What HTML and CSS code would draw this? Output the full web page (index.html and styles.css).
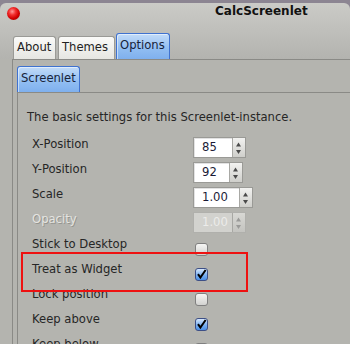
FILE: index.html
```html
<!DOCTYPE html>
<html>
<head>
<meta charset="utf-8">
<link rel="stylesheet" href="styles.css">
</head>
<body>
<div class="window">
  <div class="titlebar">
    <span class="close"></span>
    <span class="title">CalcScreenlet</span>
  </div>
  <div class="tabs">
    <div class="tab t-about">About</div>
    <div class="tab t-themes">Themes</div>
    <div class="tab active t-options">Options</div>
  </div>
  <div class="page">
    <div class="subtabs">
      <div class="tab active t-screenlet">Screenlet</div>
    </div>
    <div class="subpage">
      <p class="desc">The basic settings for this Screenlet-instance.</p>
      <div class="grid">
        <div class="label">X-Position</div>
        <div class="spin w53"><span class="val">85</span><span class="arrows"><svg width="11" height="18" viewBox="0 0 11 18"><path d="M3 7.5h5l-2.5-4z M3 11h5l-2.5 4z" fill="#4a4a4a"/></svg></span></div>

        <div class="label">Y-Position</div>
        <div class="spin w50"><span class="val">92</span><span class="arrows"><svg width="11" height="18" viewBox="0 0 11 18"><path d="M3 7.5h5l-2.5-4z M3 11h5l-2.5 4z" fill="#4a4a4a"/></svg></span></div>

        <div class="label">Scale</div>
        <div class="spin w60"><span class="val">1.00</span><span class="arrows"><svg width="11" height="18" viewBox="0 0 11 18"><path d="M3 7.5h5l-2.5-4z M3 11h5l-2.5 4z" fill="#4a4a4a"/></svg></span></div>

        <div class="label disabled">Opacity</div>
        <div class="spin w53 off"><span class="val">1.00</span><span class="arrows"><svg width="11" height="18" viewBox="0 0 11 18"><path d="M3 7.5h5l-2.5-4z M3 11h5l-2.5 4z" fill="#9a9a98"/></svg></span></div>

        <div class="label">Stick to Desktop</div>
        <div class="check"></div>

        <div class="label">Treat as Widget</div>
        <div class="check on"><svg width="13" height="13" viewBox="0 0 13 13"><path d="M3 6.2l2.4 3.3L10.6 2" fill="none" stroke="#000" stroke-width="2"/></svg></div>

        <div class="label">Lock position</div>
        <div class="check"></div>

        <div class="label">Keep above</div>
        <div class="check on"><svg width="13" height="13" viewBox="0 0 13 13"><path d="M3 6.2l2.4 3.3L10.6 2" fill="none" stroke="#000" stroke-width="2"/></svg></div>

        <div class="label">Keep below</div>
        <div class="check"></div>
      </div>
    </div>
  </div>
  <div class="highlight"></div>
</div>
</body>
</html>
```

FILE: styles.css
```css
html, body {
  margin: 0;
  padding: 0;
}
body {
  width: 350px;
  height: 344px;
  overflow: hidden;
  background: #8c8592;
  font-family: "DejaVu Sans", sans-serif;
  font-size: 11.6px;
  color: #2a2a2a;
}
.window {
  position: relative;
  margin-top: 3px;
  height: 341px;
  border-radius: 6px 6px 0 0;
  background: linear-gradient(#cbcbc7 0px, #bebeba 30px, #b3b3af 56px, #b4b4af 56px);
  overflow: hidden;
}
.titlebar {
  display: flex;
  align-items: flex-start;
  height: 26px;
  padding-top: 4px;
  box-sizing: content-box;
}
.close {
  width: 13px;
  height: 13px;
  margin-left: 7px;
  border-radius: 50%;
  background: radial-gradient(circle at 40% 35%, #ff9a9a 0, #f23030 30%, #d00000 60%, #8a0000 100%);
}
.title {
  margin-left: 195px;
  margin-top: -2px;
  font-weight: bold;
  font-size: 12px;
  line-height: 13px;
  color: #111;
}
.tabs {
  display: flex;
  align-items: flex-end;
  height: 26px;
  margin-left: 13px;
}
.tab {
  box-sizing: border-box;
  height: 23px;
  padding: 0 0 0 3px;
  line-height: 21px;
  border: 1px solid #9a9a96;
  border-bottom: none;
  border-radius: 3px 3px 0 0;
  background: linear-gradient(#fafaf8, #e6e6e2);
  color: #222;
  white-space: nowrap;
}
.t-about { width: 43px; }
.t-themes { width: 57px; margin-left: 2px; }
.t-options { width: 54px; margin-left: 1px; }
.t-screenlet { width: 63px; }
.tab.active {
  height: 26px;
  line-height: 22px;
  border-color: #3f72d0;
  background: linear-gradient(#c2dbf8, #90bdf2 60%, #7fb0ee);
  color: #17233a;
  box-shadow: inset 1px 1px 0 rgba(255,255,255,0.5);
}
.page {
  margin-left: 12px;
  border-top: 1px solid #8a8a86;
  border-left: 1px solid #8a8a86;
  background: #b4b4af;
  height: 300px;
  padding: 6px 0 0 4px;
}
.subtabs {
  display: flex;
}
.subpage {
  border-top: 1px solid #8a8a86;
  border-left: 1px solid #8a8a86;
  padding-left: 9px;
  height: 260px;
}
.desc {
  margin: 17px 0 0 0;
  line-height: 14px;
  color: #262626;
}
.grid {
  display: grid;
  grid-template-columns: 161px auto;
  grid-auto-rows: 25px;
  margin: 13px 0 0 5px;
}
.label {
  line-height: 14px;
  color: #262626;
  white-space: nowrap;
}
.label.disabled {
  color: #e4e4e0;
  text-shadow: 1px 1px 0 rgba(120,120,116,0.55);
}
.spin {
  box-sizing: border-box;
  height: 21px;
  display: flex;
  border: 1px solid #9a9a96;
  background: #fff;
  box-shadow: inset 1px 1px 0 #e2e2e2;
}
.w53 { width: 53px; }
.w50 { width: 50px; }
.w60 { width: 60px; }
.val {
  flex: 1;
  padding-left: 8px;
  line-height: 19px;
  color: #1a1a36;
}
.arrows {
  width: 12px;
  border-left: 1px solid #a8a8a4;
  background: linear-gradient(#f2f2f0, #cfcfcb);
  display: flex;
  align-items: center;
}
.spin.off {
  background: #d2d2ce;
  box-shadow: none;
  border-color: #b0b0ac;
}
.spin.off .val {
  color: #ececea;
}
.spin.off .arrows {
  background: linear-gradient(#d8d8d4, #c4c4c0);
}
.check {
  box-sizing: border-box;
  width: 13px;
  height: 13px;
  margin: 6px 0 0 2px;
  border: 1px solid #808080;
  border-radius: 3px;
  background: linear-gradient(#f6f6f4, #d2d2d0);
  position: relative;
}
.check.on {
  border-color: #3d4f86;
  background: linear-gradient(#d8e8fc, #7ab0f0 55%, #4a8fe6);
}
.check svg {
  position: absolute;
  left: -1px;
  top: -1px;
}
.highlight {
  position: absolute;
  left: 21px;
  top: 249px;
  width: 227px;
  height: 40px;
  box-sizing: border-box;
  border: 2px solid #ee1111;
}
```
